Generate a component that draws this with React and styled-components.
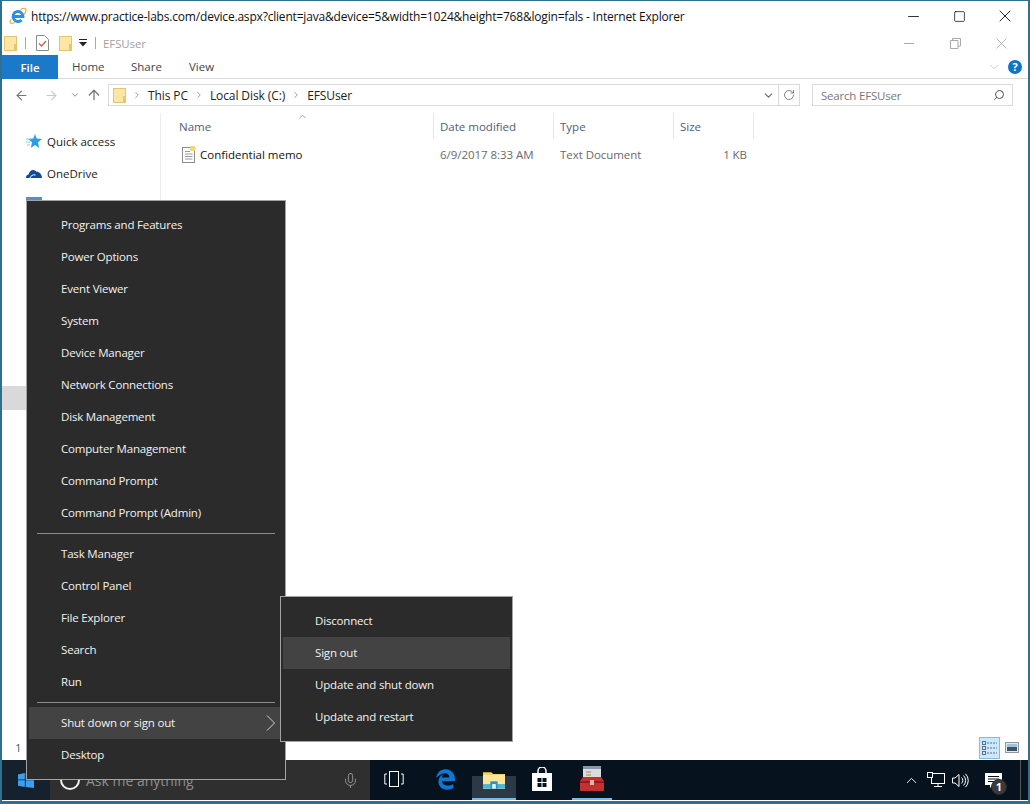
import React from 'react'
import styled, { createGlobalStyle } from 'styled-components'
import {
  ArrowLeft,
  ArrowRight,
  ArrowUp,
  ChevronDown,
  ChevronRight,
  ChevronUp,
  Mic,
  Minus,
  RotateCw,
  Search,
  Square,
  X,
} from 'lucide-react'
import { FaEdgeLegacy } from 'react-icons/fa'

const FONT = '"Open Sans", "Noto Sans", "Liberation Sans", sans-serif'

const GlobalStyle = createGlobalStyle`
  html, body {
    margin: 0;
    padding: 0;
    background: #fff;
  }
  body {
    font-family: ${FONT};
    font-size: 11.5px;
    color: #1a1a1a;
  }
  * {
    box-sizing: border-box;
  }
`

const Window = styled.div`
  position: relative;
  width: 1030px;
  height: 804px;
  display: flex;
  flex-direction: column;
  background: #fff;
  overflow: hidden;
  border: solid #2f6f8f;
  border-width: 1px 2px 3px 2px;
`

const TitleBar = styled.div`
  height: 30px;
  flex: none;
  display: flex;
  align-items: center;
  padding-left: 7px;
`

const TitleText = styled.div`
  flex: 1;
  margin-left: 4px;
  font-size: 12px;
  letter-spacing: -0.19px;
  white-space: nowrap;
  color: #111;
`

const Caption = styled.div`
  width: ${p => p.$width || 46}px;
  display: flex;
  justify-content: center;
  color: ${p => (p.$dim ? '#a9a9a9' : '#111')};
`

const QuickBar = styled.div`
  height: 24px;
  flex: none;
  display: flex;
  align-items: center;
  padding-left: 2px;
`

const QuickTitle = styled.div`
  flex: 1;
  color: #a2a2a2;
  letter-spacing: -0.1px;
`

const Pipe = styled.div`
  width: 1px;
  height: 12px;
  background: #a8a8a8;
  margin: 0 ${p => p.$right || 11}px 0 ${p => p.$left || 7}px;
`

const QuickGap = styled.div`
  width: ${p => p.$w}px;
`

const RibbonTabs = styled.div`
  height: 24px;
  flex: none;
  display: flex;
  align-items: stretch;
  border-bottom: 1px solid #dadada;
  color: #444;
`

const FileTab = styled.div`
  width: 56px;
  margin-bottom: -1px;
  background: #1979ca;
  color: #fff;
  font-weight: 600;
  display: flex;
  align-items: center;
  justify-content: center;
`

const RibbonTab = styled.div`
  width: ${p => p.$w}px;
  display: flex;
  align-items: center;
  padding-left: ${p => p.$pad}px;
`

const RibbonEnd = styled.div`
  margin-left: auto;
  display: flex;
  align-items: center;
  gap: 7px;
  padding-right: 6px;
  color: #b5b5b5;
`

const HelpBadge = styled.div`
  width: 14px;
  height: 14px;
  border-radius: 50%;
  background: #0f74c4;
  color: #fff;
  font-size: 11px;
  font-weight: 700;
  line-height: 14px;
  text-align: center;
`

const AddressRow = styled.div`
  height: 32px;
  flex: none;
  display: flex;
  align-items: center;
  padding: 0 15px 0 12px;
`

const NavButton = styled.div`
  width: ${p => p.$w}px;
  margin-left: ${p => p.$left || 0}px;
  display: flex;
  justify-content: center;
  color: ${p => (p.$dim ? '#c9c9c9' : '#7a7a7a')};
`

const AddressBox = styled.div`
  width: 692px;
  height: 22px;
  display: flex;
  align-items: center;
  border: 1px solid #d9d9d9;
  padding-left: 4px;
  color: #222;
`

const Crumb = styled.span`
  white-space: nowrap;
  font-size: 12px;
  letter-spacing: -0.1px;
`

const CrumbArrow = styled.span`
  display: flex;
  width: 22px;
  justify-content: center;
  color: #888;
`

const AddressEnd = styled.div`
  margin-left: auto;
  height: 100%;
  display: flex;
  align-items: center;
  color: #666;
`

const RefreshCell = styled.div`
  width: 21px;
  height: 100%;
  margin-left: 3px;
  border-left: 1px solid #d9d9d9;
  display: flex;
  align-items: center;
  justify-content: center;
`

const SearchBox = styled.div`
  width: 201px;
  height: 22px;
  margin-left: auto;
  border: 1px solid #d9d9d9;
  padding: 0 7px 0 8px;
  display: flex;
  align-items: center;
  justify-content: space-between;
  color: #777;
  letter-spacing: -0.2px;
`

const Main = styled.div`
  flex: 1;
  display: flex;
  min-height: 0;
`

const Sidebar = styled.div`
  width: 159px;
  flex: none;
  padding-top: 12px;
  border-right: 1px solid #ececec;
  margin-top: 2px;
`

const NavRow = styled.div`
  height: ${p => (p.$selected ? 24 : 32)}px;
  margin-top: ${p => p.$top || 0}px;
  display: flex;
  align-items: center;
  padding-left: 24px;
  gap: 5px;
  background: ${p => (p.$selected ? '#d9d9d9' : 'transparent')};
`

const FileArea = styled.div`
  flex: 1;
  padding-top: 2px;
`

const ListHeader = styled.div`
  position: relative;
  display: grid;
  grid-template-columns: 273px 120px 120px 80px;
  height: 26px;
  color: #4c607a;
`

const HeaderCell = styled.div`
  display: flex;
  align-items: center;
  padding-left: ${p => p.$pad}px;
  border-right: 1px solid #e5e5e5;
`

const SortCaret = styled.div`
  position: absolute;
  left: 136px;
  top: -3px;
  color: #777;
`

const FileRow = styled.div`
  display: grid;
  grid-template-columns: 273px 120px 120px 80px;
  height: 24px;
  margin-top: 3px;
  align-items: center;
`

const NameCell = styled.div`
  display: flex;
  align-items: center;
  gap: 4px;
  padding-left: 21px;
  color: #111;
`

const MetaCell = styled.div`
  padding: 0 7px 0 6px;
  color: #6a6a6a;
  letter-spacing: -0.05px;
  text-align: ${p => (p.$right ? 'right' : 'left')};
`

const StatusBar = styled.div`
  height: 24px;
  flex: none;
  display: flex;
  align-items: center;
  justify-content: space-between;
  padding: 0 7px 1px 13px;
  color: #4c607a;
`

const ViewToggle = styled.div`
  display: flex;
  align-items: center;
  gap: 3px;
`

const ViewButton = styled.div`
  width: ${p => p.$w}px;
  height: 22px;
  display: flex;
  align-items: center;
  justify-content: center;
  background: ${p => (p.$active ? '#cce8ff' : 'transparent')};
  border: 1px solid ${p => (p.$active ? '#7fbce6' : 'transparent')};
`

const Taskbar = styled.div`
  height: 40px;
  flex: none;
  margin-bottom: 1px;
  display: flex;
  align-items: center;
  background: #06121e;
  color: #fff;
`

const StartCell = styled.div`
  width: 48px;
  height: 100%;
  background: #15222e;
  display: flex;
  align-items: center;
  padding-left: 16px;
`

const CortanaBox = styled.div`
  width: 320px;
  height: 100%;
  background: #2f2f2f;
  display: flex;
  align-items: center;
  padding-left: 10px;
  gap: 6px;
  color: #8e8e8e;
`

const CortanaRing = styled.div`
  width: 20px;
  height: 20px;
  border: 2.5px solid #f1f1f1;
  border-radius: 50%;
`

const AskText = styled.div`
  flex: 1;
  font-size: 14px;
`

const MicSlot = styled.div`
  width: 40px;
  display: flex;
  justify-content: center;
  color: #999;
`

const TaskSlot = styled.div`
  width: ${p => p.$w || 48}px;
  height: 100%;
  margin-left: ${p => p.$left || 0}px;
  display: flex;
  align-items: center;
  justify-content: center;
  background: ${p =>
    p.$open ? 'linear-gradient(transparent 16px, #2c3a47 16px)' : 'transparent'};
  border-bottom: 2px solid ${p => (p.$underline ? '#76b9ed' : 'transparent')};
`

const Tray = styled.div`
  margin: 0 7px 0 auto;
  height: 100%;
  display: flex;
  align-items: center;
  padding-right: 6px;
  border-right: 1px solid #555;
`

const TraySlot = styled.div`
  width: ${p => p.$w}px;
  display: flex;
  justify-content: center;
  position: relative;
`

const NoticeBadge = styled.div`
  position: absolute;
  right: 7px;
  bottom: -7px;
  width: 16px;
  height: 16px;
  border-radius: 50%;
  background: #3b3b3b;
  border: 1px solid #2a2a2a;
  font-size: 11px;
  font-weight: 700;
  line-height: 14px;
  text-align: center;
  color: #fff;
`

const Menu = styled.div`
  position: absolute;
  left: ${p => p.$left}px;
  top: ${p => p.$top}px;
  width: ${p => p.$width}px;
  background: #2b2b2b;
  border: 1px solid #a3a3a3;
  padding: 8px 0;
  color: #f2f2f2;
  z-index: ${p => p.$z || 2};
`

const MenuItem = styled.div`
  height: 32px;
  margin: 0 2px;
  padding: 0 8px 1px ${p => p.$pad}px;
  display: flex;
  align-items: center;
  justify-content: space-between;
  letter-spacing: -0.18px;
  background: ${p => (p.$active ? '#434343' : 'transparent')};
`

const MenuLine = styled.div`
  height: 1px;
  margin: 4px 10px;
  background: #8c8c8c;
`

const IeIcon = () => (
  <svg width="18" height="18" viewBox="0 0 18 18" fill="none">
    <path d="M4.500 9.500h9.500A5 5 0 1 0 12.600 13" stroke="#2f8fdc" strokeWidth="2.800" />
    <path
      d="M2 12.500C.2 16 1.500 17.500 6 15.500M11.500 2.500C14.500.8 17.500 1 17 3.500c-.2 1.400-1 2.800-2 4"
      stroke="#e2b93f"
      strokeWidth="1.300"
    />
  </svg>
)

const FolderIcon = ({ size = 15 }) => (
  <svg width={size - 2} height={size} viewBox="0 0 13 15">
    <rect x="0.500" y="0.500" width="12" height="14" fill="#fce7a2" stroke="#e3c477" />
    <rect x="10" y="8" width="2.500" height="6.500" fill="#e9c66d" />
  </svg>
)

const CheckDocIcon = () => (
  <svg width="13" height="16" viewBox="0 0 13 16">
    <path d="M.5.5h8l4 4v11H.5z" fill="#fff" stroke="#8a8a8a" />
    <path d="M3 8.500l2.500 2.500L10 6" fill="none" stroke="#d2603c" strokeWidth="1.300" />
  </svg>
)

const DropLines = () => (
  <svg width="8" height="8" viewBox="0 0 8 8">
    <rect y="0" width="8" height="1" fill="#222" />
    <path d="M0 3h8L4 7.500z" fill="#222" />
  </svg>
)

const StarIcon = () => (
  <svg width="16" height="14" viewBox="0 0 16 14">
    <path d="M9 0l1.700 4.600L16 5l-4 3.200L13.200 14 9 10.900 4.800 14 6 8.200 2 5l5.300-.4z" fill="#2f9be6" />
    <path d="M0 5h5M0 8h4M1 11h3" stroke="#8ccaf3" strokeWidth="1" />
  </svg>
)

const CloudIcon = () => (
  <svg width="16" height="10" viewBox="0 0 16 10">
    <path d="M0 10c0-2 1-3.400 2.600-3.500C3.200 3.800 5 2 7 2c1.500 0 2.700.7 3.400 1.800C12.800 3.500 16 6 16 10z" fill="#0f4c97" />
    <path d="M4 10c.5-2 3-3.800 5.500-3" fill="none" stroke="#fff" strokeWidth="1" />
  </svg>
)

const MonitorIcon = () => (
  <svg width="16" height="16" viewBox="0 0 16 16">
    <rect x="0" y="0" width="16" height="11" fill="#5c8fc0" />
    <rect x="5" y="12" width="6" height="2" fill="#5c8fc0" />
  </svg>
)

const TextFileIcon = () => (
  <svg width="14" height="17" viewBox="0 0 14 17">
    <rect x="0.500" y="1.500" width="12" height="15" fill="#fff" stroke="#8d8d8d" />
    <path d="M3 5.500h5M3 8h7.500M3 10.500h7.500M3 13h7.500" stroke="#9a9a9a" />
    <rect x="8" y="0" width="5.500" height="5" rx="1" fill="#f2d679" />
  </svg>
)

const MiniMinimize = () => (
  <svg width="10" height="10" viewBox="0 0 10 10">
    <path d="M0 5.500h10" stroke="currentColor" />
  </svg>
)

const MiniRestore = () => (
  <svg width="11" height="11" viewBox="0 0 11 11" fill="none" stroke="currentColor">
    <path d="M.5 2.500h7.500v8H.5zM2.500 2.500v-2h8v7.500H8" />
  </svg>
)

const MenuChevron = () => (
  <svg width="9" height="16" viewBox="0 0 9 16" fill="none" stroke="#d0d0d0">
    <path d="M1 .5L8.500 8 1 15.500" />
  </svg>
)

const DetailsViewIcon = () => (
  <svg width="17" height="16" viewBox="0 0 17 16" fill="none" stroke="#5a7188">
    <rect x="1.500" y="1.500" width="3" height="3" />
    <rect x="1.500" y="6.500" width="3" height="3" />
    <rect x="1.500" y="11.500" width="3" height="3" />
    <path d="M6 3h10M6 8h10M6 13h10" strokeDasharray="2 1" />
  </svg>
)

const LargeViewIcon = () => (
  <svg width="14" height="11" viewBox="0 0 14 11">
    <rect x="0.500" y="0.500" width="13" height="10" fill="#dfe9f2" stroke="#8a98a6" />
    <rect x="2" y="2" width="10" height="3" fill="#9fc1dc" />
    <rect x="2" y="5" width="10" height="4" fill="#3e5364" />
  </svg>
)

const WindowsLogo = () => (
  <svg width="16" height="16" viewBox="0 0 15 15">
    <path d="M0 2.400L6.400 1v6H0zM7.200.9L15 0v7H7.200zM0 7.800h6.400V14L0 12.800zM7.200 7.800H15V15l-7.800-1z" fill="#3d9ff0" />
  </svg>
)

const TaskViewIcon = () => (
  <svg width="20" height="16" viewBox="0 0 20 16" fill="none" stroke="#fff">
    <rect x="5.500" y="0.500" width="9" height="15" />
    <path d="M3 3H.8v10H3M17 3h2.200v10H17" />
  </svg>
)

const ExplorerIcon = () => (
  <svg width="22" height="19" viewBox="0 0 24 20">
    <path d="M0 2h9l2 2h13v16H0z" fill="#f4cf63" />
    <rect x="0" y="5" width="24" height="15" fill="#fbe79c" />
    <rect x="0" y="15" width="24" height="5" fill="#4fb6d9" />
    <rect x="8" y="12" width="8" height="8" fill="#2e93b8" />
    <rect x="10" y="15" width="4" height="5" fill="#dff3fa" />
  </svg>
)

const StoreIcon = () => (
  <svg width="20" height="24" viewBox="0 0 20 24">
    <path d="M6 7V4a4 4 0 0 1 8 0v3" fill="none" stroke="#fff" strokeWidth="1.500" />
    <path d="M0 6h20v18H0z" fill="#fff" />
    <path d="M5.500 11h4v4h-4zM10.500 11h4v4h-4zM5.500 16h4v4h-4zM10.500 16h4v4h-4z" fill="#06121e" />
  </svg>
)

const ToolboxIcon = () => (
  <svg width="24" height="26" viewBox="0 0 24 26">
    <rect x="3" y="0" width="18" height="14" fill="#d8dde2" />
    <rect x="3" y="0" width="18" height="3" fill="#8895a3" />
    <path d="M6 6h5M6 9h5" stroke="#c47a3e" />
    <path d="M0 15l3-4h18l3 4v10H0z" fill="#c62f2f" />
    <rect x="0" y="15" width="24" height="2" fill="#8e1f1f" />
    <rect x="10" y="14" width="4" height="5" fill="#e9b4a6" />
  </svg>
)

const NetworkIcon = () => (
  <svg width="18" height="16" viewBox="0 0 18 16" fill="none" stroke="#fff">
    <rect x="4.500" y="1.500" width="13" height="10" />
    <rect x="0.500" y="0.500" width="5" height="5" fill="#06121e" />
    <path d="M11 11.500v3M7 14.500h8" />
  </svg>
)

const VolumeIcon = () => (
  <svg width="17" height="15" viewBox="0 0 17 15" fill="none" stroke="#fff">
    <path d="M.5 5h2.500L7 1.500v12L3 10H.5z" />
    <path d="M9.500 4.500a4 4 0 0 1 0 6M11.500 2.500a7 7 0 0 1 0 10M13.500 .8a9.500 9.500 0 0 1 0 13.400" />
  </svg>
)

const NoticeIcon = () => (
  <svg width="17" height="15" viewBox="0 0 17 15">
    <path d="M0 0h17v12H8l-3 3v-3H0z" fill="#fff" />
    <path d="M3 3.500h11M3 6h11M3 8.500h7" stroke="#06121e" />
  </svg>
)

const mainItems = [
  'Programs and Features',
  'Power Options',
  'Event Viewer',
  'System',
  'Device Manager',
  'Network Connections',
  'Disk Management',
  'Computer Management',
  'Command Prompt',
  'Command Prompt (Admin)',
]

const toolItems = ['Task Manager', 'Control Panel', 'File Explorer', 'Search', 'Run']

const signOutItems = ['Disconnect', 'Sign out', 'Update and shut down', 'Update and restart']

const App = () => (
  <Window>
    <GlobalStyle />
    <TitleBar>
      <IeIcon />
      <TitleText>
        https://www.practice-labs.com/device.aspx?client=java&device=5&width=1024&height=768&login=fals - Internet Explorer
      </TitleText>
      <Caption>
        <Minus size={17} strokeWidth={1.2} />
      </Caption>
      <Caption>
        <Square size={13} strokeWidth={1.4} />
      </Caption>
      <Caption>
        <X size={20} strokeWidth={1.1} />
      </Caption>
    </TitleBar>

    <QuickBar>
      <FolderIcon />
      <Pipe $left={8} $right={10} />
      <CheckDocIcon />
      <QuickGap $w={10} />
      <FolderIcon />
      <QuickGap $w={7} />
      <DropLines />
      <Pipe $left={8} $right={7} />
      <QuickTitle>EFSUser</QuickTitle>
      <Caption $dim>
        <MiniMinimize />
      </Caption>
      <Caption $dim>
        <MiniRestore />
      </Caption>
      <Caption $dim>
        <X size={19} strokeWidth={1} />
      </Caption>
      <QuickGap $w={4} />
    </QuickBar>

    <RibbonTabs>
      <FileTab>File</FileTab>
      <RibbonTab $w={59} $pad={14}>Home</RibbonTab>
      <RibbonTab $w={58} $pad={14}>Share</RibbonTab>
      <RibbonTab $w={50} $pad={14}>View</RibbonTab>
      <RibbonEnd>
        <ChevronDown size={14} strokeWidth={1.2} />
        <HelpBadge>?</HelpBadge>
      </RibbonEnd>
    </RibbonTabs>

    <AddressRow>
      <ArrowLeft size={15} strokeWidth={1.8} color="#777" />
      <NavButton $dim $w={38} $left={3}>
        <ArrowRight size={15} strokeWidth={1.8} />
      </NavButton>
      <NavButton $w={10}>
        <ChevronDown size={10} strokeWidth={2} />
      </NavButton>
      <NavButton $w={28}>
        <ArrowUp size={16} strokeWidth={2} />
      </NavButton>
      <AddressBox>
        <FolderIcon />
        <CrumbArrow>
          <ChevronRight size={10} strokeWidth={2} />
        </CrumbArrow>
        <Crumb>This PC</Crumb>
        <CrumbArrow>
          <ChevronRight size={10} strokeWidth={2} />
        </CrumbArrow>
        <Crumb>Local Disk (C:)</Crumb>
        <CrumbArrow>
          <ChevronRight size={10} strokeWidth={2} />
        </CrumbArrow>
        <Crumb>EFSUser</Crumb>
        <AddressEnd>
          <ChevronDown size={13} strokeWidth={2} />
          <RefreshCell>
            <RotateCw size={12} strokeWidth={1.6} />
          </RefreshCell>
        </AddressEnd>
      </AddressBox>
      <SearchBox>
        <span>Search EFSUser</span>
        <Search size={12} strokeWidth={2} color="#555" style={{ transform: 'scaleX(-1)' }} />
      </SearchBox>
    </AddressRow>

    <Main>
      <Sidebar>
        <NavRow>
          <StarIcon />
          <span>Quick access</span>
        </NavRow>
        <NavRow>
          <CloudIcon />
          <span>OneDrive</span>
        </NavRow>
        <NavRow>
          <MonitorIcon />
          <span>This PC</span>
        </NavRow>
        <NavRow $selected $top={165} />
      </Sidebar>
      <FileArea>
        <ListHeader>
          <SortCaret>
            <ChevronUp size={11} strokeWidth={1.5} />
          </SortCaret>
          <HeaderCell $pad={18}>Name</HeaderCell>
          <HeaderCell $pad={6}>Date modified</HeaderCell>
          <HeaderCell $pad={6}>Type</HeaderCell>
          <HeaderCell $pad={6}>Size</HeaderCell>
        </ListHeader>
        <FileRow>
          <NameCell>
            <TextFileIcon />
            <span>Confidential memo</span>
          </NameCell>
          <MetaCell>6/9/2017 8:33 AM</MetaCell>
          <MetaCell>Text Document</MetaCell>
          <MetaCell $right>1 KB</MetaCell>
        </FileRow>
      </FileArea>
    </Main>

    <StatusBar>
      <span>1</span>
      <ViewToggle>
        <ViewButton $active $w={21}>
          <DetailsViewIcon />
        </ViewButton>
        <ViewButton $w={18}>
          <LargeViewIcon />
        </ViewButton>
      </ViewToggle>
    </StatusBar>

    <Taskbar>
      <StartCell>
        <WindowsLogo />
      </StartCell>
      <CortanaBox>
        <CortanaRing />
        <AskText>Ask me anything</AskText>
        <MicSlot>
          <Mic size={17} strokeWidth={1.3} />
        </MicSlot>
      </CortanaBox>
      <TaskSlot>
        <TaskViewIcon />
      </TaskSlot>
      <TaskSlot $w={54}>
        <FaEdgeLegacy size={21} color="#0f78d4" />
      </TaskSlot>
      <TaskSlot $open $underline $w={44}>
        <ExplorerIcon />
      </TaskSlot>
      <TaskSlot $w={52}>
        <StoreIcon />
      </TaskSlot>
      <TaskSlot $underline $w={40} $left={4}>
        <ToolboxIcon />
      </TaskSlot>
      <Tray>
        <TraySlot $w={26}>
          <ChevronUp size={17} strokeWidth={1.3} />
        </TraySlot>
        <TraySlot $w={24}>
          <NetworkIcon />
        </TraySlot>
        <TraySlot $w={24}>
          <VolumeIcon />
        </TraySlot>
        <TraySlot $w={42}>
          <NoticeIcon />
          <NoticeBadge>1</NoticeBadge>
        </TraySlot>
      </Tray>
    </Taskbar>

    <Menu $left={24} $top={199} $width={260}>
      {mainItems.map(label => (
        <MenuItem key={label} $pad={32}>{label}</MenuItem>
      ))}
      <MenuLine />
      {toolItems.map(label => (
        <MenuItem key={label} $pad={32}>{label}</MenuItem>
      ))}
      <MenuLine />
      <MenuItem $pad={32} $active>
        Shut down or sign out
        <MenuChevron />
      </MenuItem>
      <MenuItem $pad={32}>Desktop</MenuItem>
    </Menu>

    <Menu $left={278} $top={595} $width={233} $z={3}>
      {signOutItems.map(label => (
        <MenuItem key={label} $pad={32} $active={label === 'Sign out'}>{label}</MenuItem>
      ))}
    </Menu>
  </Window>
)

export default App
